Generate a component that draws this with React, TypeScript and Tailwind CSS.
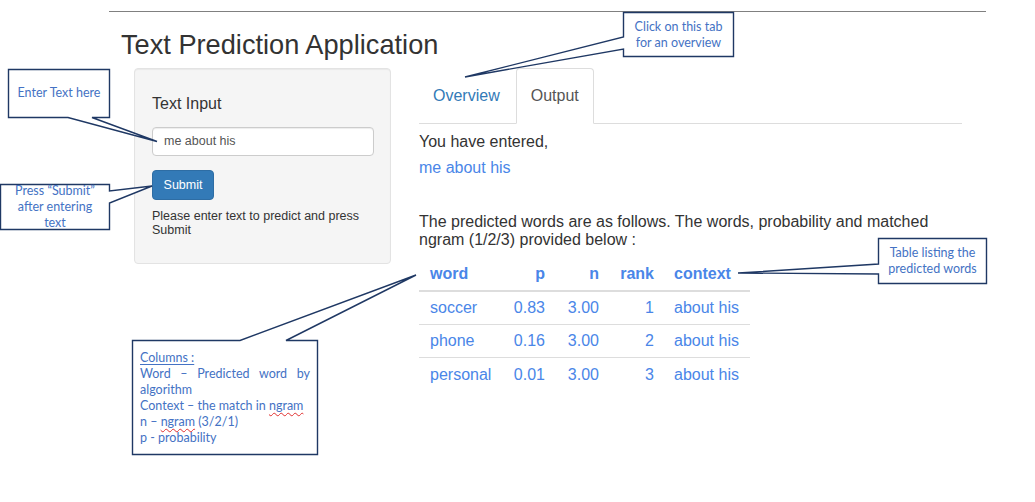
import React from "react";

const rows = [
  { word: "soccer", p: "0.83", n: "3.00", rank: 1, context: "about his" },
  { word: "phone", p: "0.16", n: "3.00", rank: 2, context: "about his" },
  { word: "personal", p: "0.01", n: "3.00", rank: 3, context: "about his" },
];

export default function App() {
  return (
    <div className="relative w-[1035px] h-[502px] overflow-hidden bg-white font-['Liberation_Sans',Arial,sans-serif] text-[#333]">
      <div className="ml-[109px] mt-[11px] w-[877px] border-t border-[#808080]">
        <h1 className="mt-[18px] pl-[12px] text-[27.2px] leading-[29px] font-normal text-[#333]">Text Prediction Application</h1>

        <div className="mt-[9px] flex">
          {/* Left: input panel */}
          <div className="ml-[25px] w-[257px]">
            <div className="h-[196px] rounded-[4px] border border-[#e3e3e3] bg-[#f5f5f5] shadow-[inset_0_1px_1px_rgba(0,0,0,0.05)] pl-[17px] pr-[16px] pt-[26px]">
              <div className="text-[16px] leading-[18px]">Text Input</div>
              <div className="mt-[14px] flex h-[29px] items-center rounded-[4px] border border-[#ccc] bg-white px-[11px] text-[12.5px] text-[#555] shadow-[inset_0_1px_1px_rgba(0,0,0,0.075)]">
                me about his
              </div>
              <button className="mt-[14px] flex h-[30px] w-[62px] items-center justify-center rounded-[4px] border border-[#2e6da4] bg-[#337ab7] text-[12.5px] text-white">
                Submit
              </button>
              <p className="mt-[10px] text-[12.5px] leading-[13.5px]">Please enter text to predict and press Submit</p>
            </div>
          </div>

          {/* Right: tabs and output */}
          <div className="ml-[28px] w-[543px]">
            <div className="flex h-[56px] border-b border-[#ddd]">
              <div className="mr-[2px] flex items-center border border-transparent px-[13px] text-[16px] text-[#337ab7]">Overview</div>
              <div className="-mb-px flex h-[56px] items-center rounded-t-[4px] border border-[#ddd] border-b-transparent bg-white px-[14px] text-[16px] text-[#555]">
                Output
              </div>
            </div>

            <div className="pt-[9px] text-[16px] leading-[18px]">
              <p>You have entered,</p>
              <p className="mt-[8px] text-[#4a86e8]">me about his</p>
              <p className="mt-[36px]">The predicted words are as follows. The words, probability and matched ngram (1/2/3) provided below :</p>

              <div className="mt-[9px] w-[331px] text-[#4a86e8]">
                <div className="flex h-[34px] items-center border-b-2 border-[#ddd] font-bold">
                  <div className="w-[81px] pl-[11px]">word</div>
                  <div className="w-[55px] pr-[10px] text-right">p</div>
                  <div className="w-[54px] pr-[10px] text-right">n</div>
                  <div className="w-[55px] pr-[10px] text-right">rank</div>
                  <div className="w-[86px] pl-[10px]">context</div>
                </div>
                {rows.map((r, i) => (
                  <div key={r.word} className={`flex h-[33px] items-center ${i < rows.length - 1 ? "border-b border-[#ddd]" : ""}`}>
                    <div className="w-[81px] pl-[11px]">{r.word}</div>
                    <div className="w-[55px] pr-[10px] text-right">{r.p}</div>
                    <div className="w-[54px] pr-[10px] text-right">{r.n}</div>
                    <div className="w-[55px] pr-[10px] text-right">{r.rank}</div>
                    <div className="w-[86px] pl-[10px]">{r.context}</div>
                  </div>
                ))}
              </div>
            </div>
          </div>
        </div>
      </div>

      {/* Annotation callouts */}
      <svg className="pointer-events-none absolute left-0 top-0" width="1035" height="502" viewBox="0 0 1035 502">
        <g fill="#fff" stroke="#1f3864" strokeWidth="1.4" strokeLinejoin="miter">
          <polygon points="8.5,69.5 109.5,69.5 109.5,117.5 92,117.5 157,141.5 68,117.5 8.5,117.5" />
          <polygon points="0.5,184.5 109.5,184.5 109.5,191 152,186 109.5,203 109.5,229.5 0.5,229.5" />
          <polygon points="623.5,12.5 733.5,12.5 733.5,56.5 623.5,56.5 623.5,49 465,77 623.5,37" />
          <polygon points="878.5,238.5 986.5,238.5 986.5,283.5 878.5,283.5 878.5,274 738,273 878.5,264" />
          <polygon points="132.5,340.5 240,340.5 416,275 286,340.5 317.5,340.5 317.5,454.5 132.5,454.5" />
        </g>
      </svg>

      <div className="absolute left-[9px] top-[70px] flex h-[47px] w-[100px] items-center justify-center font-['Lato',sans-serif] text-[12.5px] text-[#4472c4]">
        Enter Text here
      </div>
      <div className="absolute left-[1px] top-[185px] flex h-[44px] w-[108px] flex-col items-center justify-center font-['Lato',sans-serif] text-[12.5px] leading-[16px] text-[#4472c4]">
        <span>Press “Submit”</span>
        <span>after entering</span>
        <span>text</span>
      </div>
      <div className="absolute left-[624px] top-[13px] flex h-[43px] w-[109px] flex-col items-center justify-center font-['Lato',sans-serif] text-[12.5px] leading-[16px] text-[#4472c4]">
        <span>Click on this tab</span>
        <span>for an overview</span>
      </div>
      <div className="absolute left-[879px] top-[239px] flex h-[44px] w-[107px] flex-col items-center justify-center font-['Lato',sans-serif] text-[12.5px] leading-[16px] text-[#4472c4]">
        <span>Table listing the</span>
        <span>predicted words</span>
      </div>
      <div className="absolute left-[133px] top-[341px] w-[184px] px-[7px] pt-[9px] font-['Lato',sans-serif] text-[12.5px] leading-[16px] text-[#4472c4]">
        <p className="underline underline-offset-2">Columns :</p>
        <p className="text-justify">Word – Predicted word by algorithm</p>
        <p className="whitespace-nowrap">
          Context – the match in <span className="underline decoration-wavy decoration-[#e03030] decoration-1 underline-offset-2">ngram</span>
        </p>
        <p>
          n – <span className="underline decoration-wavy decoration-[#e03030] decoration-1 underline-offset-2">ngram</span> (3/2/1)
        </p>
        <p>p - probability</p>
      </div>
    </div>
  );
}
